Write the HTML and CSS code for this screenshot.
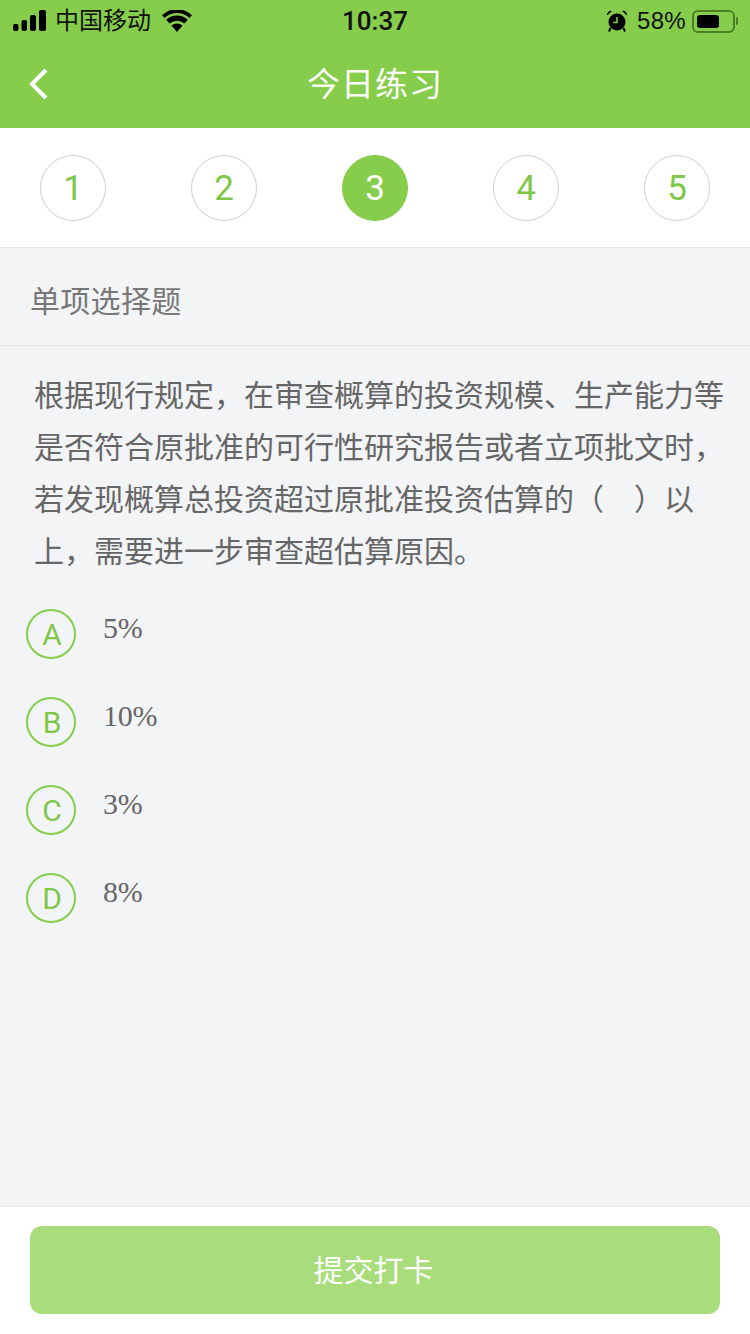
FILE: index.html
```html
<!DOCTYPE html>
<html lang="zh-CN">
<head>
    <meta charset="UTF-8">
    <meta name="viewport" content="width=device-width, initial-scale=1.0">
    <title>今日练习</title>
    <link rel="stylesheet" href="styles.css">
</head>
<body>
    <div class="page">
        <div class="header">
            <div class="status-bar">
                <div class="status-left">
                    <svg class="signal" width="33" height="22" viewBox="0 0 33 22">
                        <rect x="0" y="14" width="5.5" height="7" rx="2"/>
                        <rect x="8.5" y="10" width="5.5" height="11" rx="2"/>
                        <rect x="17" y="5" width="6" height="16" rx="2"/>
                        <rect x="26" y="0" width="7" height="21" rx="2"/>
                    </svg>
                    <span class="carrier">中国移动</span>
                    <svg class="wifi" width="30" height="22" viewBox="0 0 30 22">
                        <path d="M15 22 L9.4 15.6 A8.6 8.6 0 0 1 20.6 15.6 Z"/>
                        <path d="M7.6 13.6 L4.2 9.8 A15.5 15.5 0 0 1 25.8 9.8 L22.4 13.6 A11 11 0 0 0 7.6 13.6 Z"/>
                        <path d="M2.6 8 L0 5.2 A21.8 21.8 0 0 1 30 5.2 L27.4 8 A18 18 0 0 0 2.6 8 Z"/>
                    </svg>
                </div>
                <div class="status-time">10:37</div>
                <div class="status-right">
                    <svg class="alarm" width="20" height="22" viewBox="0 0 20 22">
                        <circle cx="10" cy="12" r="8.5"/>
                        <path d="M0 5.5 A4 4 0 0 1 5 1 Z"/>
                        <path d="M20 5.5 A4 4 0 0 0 15 1 Z"/>
                        <path d="M3.5 18 L2 21.5 M16.5 18 L18 21.5" class="alarm-leg"/>
                        <path d="M10 7 V12.5 H6" class="alarm-hand"/>
                    </svg>
                    <span class="battery-text">58%</span>
                    <div class="battery">
                        <div class="battery-level"></div>
                    </div>
                    <div class="battery-cap"></div>
                </div>
            </div>
            <div class="nav-bar">
                <svg class="back" width="20" height="32" viewBox="0 0 20 32">
                    <path d="M17 2 L3 16 L17 30"/>
                </svg>
                <div class="nav-title">今日练习</div>
            </div>
        </div>

        <div class="steps">
            <div class="step">1</div>
            <div class="step">2</div>
            <div class="step step-active">3</div>
            <div class="step">4</div>
            <div class="step">5</div>
        </div>

        <div class="content">
            <div class="type-row">单项选择题</div>
            <div class="question">根据现行规定，在审查概算的投资规模、生产能力等是否符合原批准的可行性研究报告或者立项批文时，若发现概算总投资超过原批准投资估算的（&nbsp;&nbsp;&nbsp;&#8198;）以上，需要进一步审查超估算原因。</div>
            <div class="options">
                <div class="option">
                    <div class="option-key">A</div>
                    <div class="option-text">5%</div>
                </div>
                <div class="option">
                    <div class="option-key">B</div>
                    <div class="option-text">10%</div>
                </div>
                <div class="option">
                    <div class="option-key">C</div>
                    <div class="option-text">3%</div>
                </div>
                <div class="option">
                    <div class="option-key">D</div>
                    <div class="option-text">8%</div>
                </div>
            </div>
        </div>

        <div class="footer">
            <button class="submit" type="button">提交打卡</button>
        </div>
    </div>
</body>
</html>
```

FILE: styles.css
```css
html, body {
    margin: 0;
    padding: 0;
}
body {
    font-family: "Liberation Sans", "Noto Sans CJK SC", sans-serif;
    background-color: #f2f4f6;
}
.page {
    width: 750px;
    height: 1334px;
    display: flex;
    flex-direction: column;
    overflow: hidden;
}

/* header */
.header {
    height: 128px;
    background-color: #86cd4b;
    flex-shrink: 0;
}
.status-bar {
    height: 40px;
    padding: 2px 12px 0 13px;
    box-sizing: border-box;
    display: grid;
    grid-template-columns: 1fr auto 1fr;
    align-items: center;
    color: #111;
}
.status-left {
    display: flex;
    align-items: center;
}
.signal {
    fill: #000;
}
.carrier {
    font-size: 24px;
    line-height: 38px;
    margin-left: 9px;
}
.wifi {
    fill: #000;
    margin-left: 11px;
}
.status-time {
    font-family: Roboto, "Liberation Sans", sans-serif;
    font-size: 26px;
    font-weight: 500;
    margin-right: 1px;
}
.status-right {
    display: flex;
    align-items: center;
    justify-content: flex-end;
}
.alarm {
    fill: #000;
    margin-right: 10px;
}
.alarm-leg {
    fill: none;
    stroke: #000;
    stroke-width: 2;
}
.alarm-hand {
    fill: none;
    stroke: #86cd4b;
    stroke-width: 1.6;
}
.battery-text {
    font-size: 24px;
    letter-spacing: 0.3px;
    margin-right: 6px;
}
.battery {
    width: 43px;
    height: 23px;
    box-sizing: border-box;
    border: 2px solid #4c7f25;
    border-radius: 6px;
    padding: 3px;
}
.battery-level {
    width: 22px;
    height: 13px;
    background-color: #000;
    border-radius: 3px;
}
.battery-cap {
    width: 2px;
    height: 8px;
    margin-left: 1px;
    background-color: #4c7f25;
    border-radius: 0 2px 2px 0;
}
.nav-bar {
    height: 88px;
    position: relative;
    display: flex;
    align-items: center;
    justify-content: center;
}
.back {
    position: absolute;
    left: 29px;
    top: 28px;
    fill: none;
    stroke: #fff;
    stroke-width: 4;
}
.nav-title {
    font-size: 33px;
    color: #fff;
    letter-spacing: 1px;
    margin-top: -4px;
}

/* step numbers */
.steps {
    height: 120px;
    flex-shrink: 0;
    box-sizing: border-box;
    background-color: #fff;
    border-bottom: 1px solid #e6e6e6;
    padding: 27px 40px 0;
    display: flex;
    justify-content: space-between;
    align-items: flex-start;
}
.step {
    width: 66px;
    height: 66px;
    box-sizing: border-box;
    border: 1px solid #cfcfcf;
    border-radius: 50%;
    color: #7fc749;
    font-family: Roboto, "Liberation Sans", sans-serif;
    font-size: 35px;
    display: flex;
    align-items: center;
    justify-content: center;
}
.step-active {
    background-color: #86cd4b;
    border-color: #86cd4b;
    color: #fff;
}

/* question */
.content {
    flex: 1;
}
.type-row {
    height: 98px;
    box-sizing: border-box;
    border-bottom: 1px solid #e6e8ea;
    padding-left: 30px;
    line-height: 107px;
    font-size: 30px;
    letter-spacing: 0.3px;
    color: #777;
}
.question {
    padding: 24px 20px 0 34px;
    font-size: 30px;
    line-height: 52px;
    color: #666;
}
.options {
    padding: 31px 0 0 26px;
}
.option {
    height: 88px;
    display: flex;
    align-items: flex-start;
}
.option-key {
    width: 50px;
    height: 50px;
    box-sizing: border-box;
    border: 2px solid #86cd4b;
    border-radius: 50%;
    padding-left: 2px;
    color: #7fc749;
    font-family: Roboto, "Liberation Sans", sans-serif;
    font-size: 30px;
    display: flex;
    align-items: center;
    justify-content: center;
}
.option-text {
    margin: 0 0 0 27px;
    font-family: "Liberation Serif", serif;
    font-size: 30px;
    letter-spacing: -0.3px;
    line-height: 38px;
    color: #666;
}

/* bottom button */
.footer {
    height: 128px;
    flex-shrink: 0;
    box-sizing: border-box;
    background-color: #fff;
    border-top: 1px solid #e6e8ea;
    padding: 19px 30px 0;
}
.submit {
    display: block;
    width: 100%;
    height: 88px;
    border: none;
    border-radius: 12px;
    padding: 0 3px 4px 0;
    background-color: #a9dc7a;
    color: #fff;
    font-family: "Liberation Sans", "Noto Sans CJK SC", sans-serif;
    font-size: 30px;
}
```
